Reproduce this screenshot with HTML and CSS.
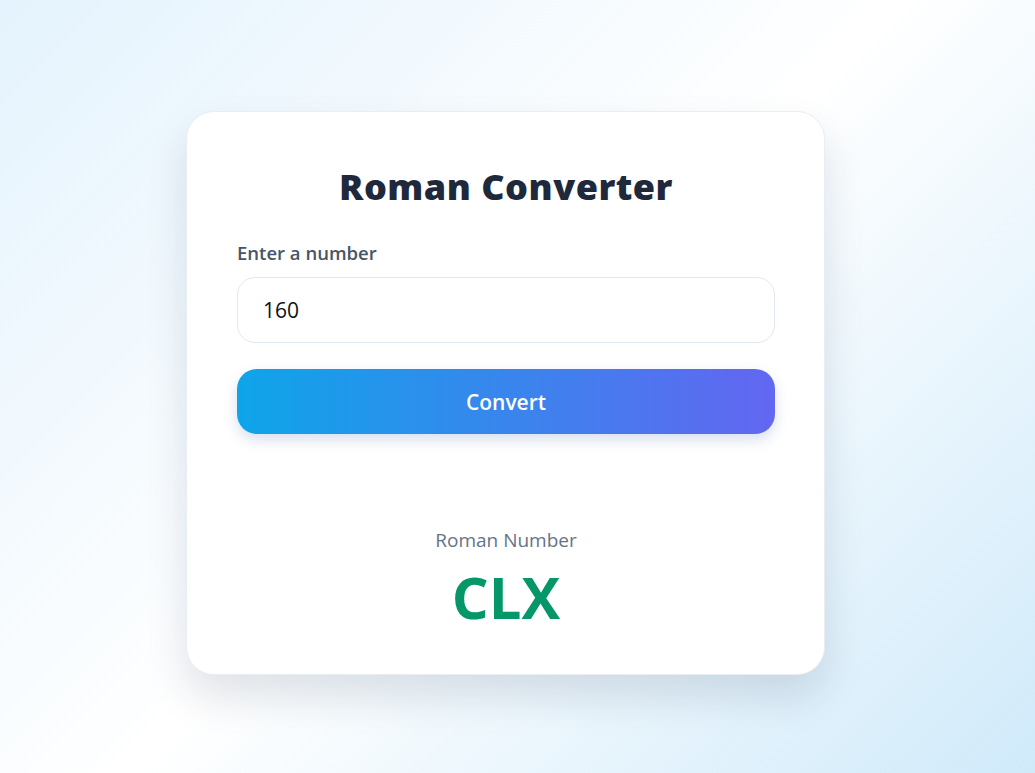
FILE: index.html
```html
<!DOCTYPE html>
<html lang="en">
<head>
<meta charset="utf-8">
<title>Roman Converter</title>
<link rel="stylesheet" href="styles.css">
</head>
<body>
<main class="page">
  <section class="card">
    <h1 class="title">Roman Converter</h1>
    <label class="label" for="num">Enter a number</label>
    <input class="input" id="num" type="text" value="160">
    <button class="btn" type="button">Convert</button>
    <div class="result">
      <div class="result-label">Roman Number</div>
      <div class="result-value">CLX</div>
    </div>
  </section>
</main>
</body>
</html>
```

FILE: styles.css
```css
* { box-sizing: border-box; }
html, body { margin: 0; height: 100%; }
body {
  font-family: "Open Sans", "Noto Sans", "Liberation Sans", sans-serif;
  background: linear-gradient(135deg, #e4f3fd 0%, #ffffff 50%, #d0eafa 100%);
}
.page {
  min-height: 100vh;
  display: flex;
  align-items: center;
  justify-content: center;
  padding: 13px 24px 0 0;
}
.card {
  width: 639px;
  background: #fff;
  border: 1px solid #e9eef4;
  border-radius: 28px;
  padding: 53px 49px 42px 50px;
  box-shadow: 0 22px 40px rgba(15, 40, 70, 0.13);
  display: flex;
  flex-direction: column;
}
.title {
  margin: 0 0 32px;
  text-align: center;
  font-size: 36px;
  font-weight: 800;
  letter-spacing: 0.5px;
  color: #1e293b;
  line-height: 1.2;
}
.label {
  font-size: 18.5px;
  font-weight: 600;
  color: #475569;
  margin-bottom: 12px;
}
.input {
  height: 66px;
  border: 1.5px solid #e2e8f0;
  border-radius: 18px;
  padding: 0 25px;
  font-family: inherit;
  font-size: 21px;
  color: #111;
  outline: none;
  margin-bottom: 26px;
}
.btn {
  height: 65px;
  border: 0;
  border-radius: 20px;
  background: linear-gradient(90deg, #0ea5e9 0%, #6366f1 100%);
  color: #fff;
  font-family: inherit;
  font-size: 21px;
  font-weight: 600;
  box-shadow: 0 6px 14px rgba(40, 80, 160, 0.18);
}
.result {
  margin-top: 94px;
  text-align: center;
}
.result-label {
  font-size: 19px;
  color: #64748b;
  line-height: 1.3;
}
.result-value {
  margin-top: 9px;
  font-size: 58px;
  font-weight: 700;
  color: #059669;
  line-height: 1.2;
}
```
